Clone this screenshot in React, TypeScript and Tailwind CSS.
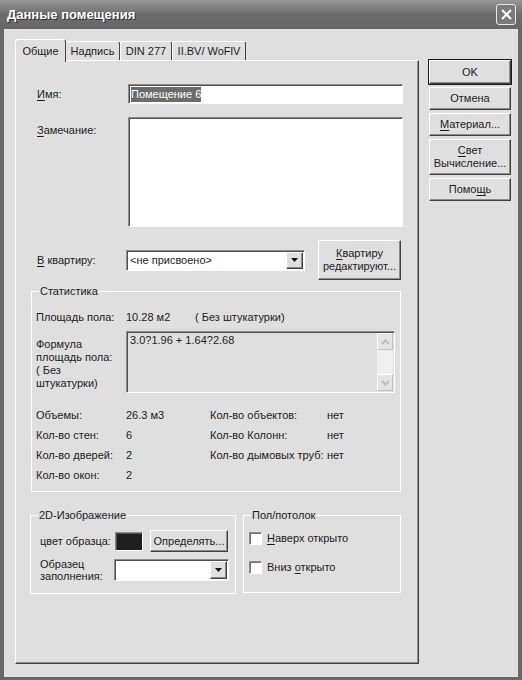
import React from "react";

const font = "font-['Liberation_Sans',Arial,sans-serif]";
const raised =
  "border border-t-white border-l-white border-r-[#404040] border-b-[#404040] shadow-[inset_-1px_-1px_0_#8c8c8c]";
const sunken =
  "border border-t-[#8c8c8c] border-l-[#8c8c8c] border-r-white border-b-white shadow-[inset_1px_1px_0_#505050]";

function U({ children }: { children: React.ReactNode }) {
  return <span className="underline underline-offset-[2px]">{children}</span>;
}

function Btn({ className = "", children }: { className?: string; children: React.ReactNode }) {
  return (
    <div className={`${raised} bg-[#dfdfdf] flex items-center justify-center text-center leading-[13px] ${className}`}>
      {children}
    </div>
  );
}

function Select({ className = "", value = "" }: { className?: string; value?: string }) {
  return (
    <div className={`${sunken} bg-white flex items-stretch p-[1px] ${className}`}>
      <div className="flex-1 pl-[2px] flex items-center">{value}</div>
      <div className={`${raised} w-[17px] bg-[#dfdfdf] flex items-center justify-center`}>
        <svg width="7" height="4" viewBox="0 0 7 4">
          <path d="M0 0h7L3.5 4z" fill="#111" />
        </svg>
      </div>
    </div>
  );
}

function Group({ title, className = "", children }: { title: string; className?: string; children: React.ReactNode }) {
  return (
    <fieldset className={`border border-white ${className}`}>
      <legend className="ml-[7px] px-[1px] leading-[13px]">{title}</legend>
      {children}
    </fieldset>
  );
}

function Check({ children }: { children: React.ReactNode }) {
  return (
    <div className="flex items-center h-[13px]">
      <div className="w-[13px] h-[13px] bg-white border border-t-[#8c8c8c] border-l-[#8c8c8c] border-b-white border-r-white shadow-[inset_1px_1px_0_#707070]" />
      <span className="ml-[5px]">{children}</span>
    </div>
  );
}

function Chevron({ up }: { up?: boolean }) {
  return (
    <div className="h-[17px] border border-t-white border-l-white border-r-[#c4c4c4] border-b-[#c4c4c4] bg-[#e4e4e4] flex items-center justify-center">
      <svg width="9" height="6" viewBox="0 0 9 6">
        <path d={up ? "M1 5l3.5-3.5L8 5" : "M1 1l3.5 3.5L8 1"} stroke="#bdbdbd" strokeWidth="2" fill="none" />
      </svg>
    </div>
  );
}

export default function App() {
  const stats = [
    ["Объемы:", "26.3 м3", "Кол-во объектов:", "нет"],
    ["Кол-во стен:", "6", "Кол-во Колонн:", "нет"],
    ["Кол-во дверей:", "2", "Кол-во дымовых труб:", "нет"],
    ["Кол-во окон:", "2", "", ""],
  ];

  return (
    <div className={`${font} w-[522px] h-[680px] flex flex-col text-[11px] text-[#1c1c1c] bg-[#676767]`}>
      <div className="h-[29px] flex items-center justify-between pl-[7px] pr-[6px] bg-linear-to-b from-[#979797] via-[#6d6d6d] to-[#666666]">
        <span className="text-white font-bold text-[13px] [text-shadow:1px_1px_0_#2e2e2e]">Данные помещения</span>
        <div className="w-[20px] h-[21px] rounded-[3px] border border-[#e8e8e8] bg-[#7a7a7a] flex items-center justify-center">
          <svg width="11" height="11" viewBox="0 0 11 11">
            <path d="M1 1l9 9M10 1l-9 9" stroke="#fff" strokeWidth="2" />
          </svg>
        </div>
      </div>

      <div className="flex-1 flex bg-[#dfdfdf] border-l-[4px] border-r-[4px] border-b-[3px] border-[#676767] pl-[11px] pt-[10px]">
        <div className="w-[404px] flex flex-col">
          <div className="flex items-end h-[21px]">
            <div className="relative z-10 -mb-[2px] h-[23px] w-[51px] bg-[#dfdfdf] border-t border-l border-r border-t-white border-l-white border-r-[#404040] rounded-t-[3px] flex items-center justify-center">
              Общие
            </div>
            <div className="h-[19px] w-[54px] border-t border-r border-t-white border-r-[#404040] rounded-t-[3px] flex items-center justify-center pt-[1px]">
              Надпись
            </div>
            <div className="h-[19px] w-[52px] border-t border-l border-r border-t-white border-l-white border-r-[#404040] rounded-t-[3px] flex items-center justify-center pt-[1px]">
              DIN 277
            </div>
            <div className="h-[19px] w-[74px] border-t border-l border-r border-t-white border-l-white border-r-[#404040] rounded-t-[3px] flex items-center justify-center pt-[1px]">
              II.BV/ WoFlV
            </div>
          </div>

          <div className={`h-[604px] bg-[#dfdfdf] flex flex-col ${raised}`}>
            <div className="mt-[23px] flex items-center pl-[21px]">
              <span className="w-[91px]">
                <U>И</U>мя:
              </span>
              <div className={`${sunken} bg-white w-[275px] h-[20px] flex items-center pl-[2px]`}>
                <span className="bg-[#6b6b6b] text-white leading-[15px]">Помещение 6</span>
              </div>
            </div>

            <div className="mt-[13px] flex items-start pl-[21px]">
              <span className="w-[91px] mt-[5px]">
                <U>З</U>амечание:
              </span>
              <div className={`${sunken} bg-white w-[275px] h-[110px]`} />
            </div>

            <div className="mt-[13px] flex items-center pl-[21px] h-[40px]">
              <span className="w-[89px]">
                <U>В</U> квартиру:
              </span>
              <Select className="w-[179px] h-[21px]" value="<не присвоено>" />
              <Btn className="ml-[13px] w-[83px] h-[40px]">
                <span>
                  <U>К</U>вартиру
                  <br />
                  редактируют...
                </span>
              </Btn>
            </div>

            <Group title="Статистика" className="mt-[5px] ml-[15px] w-[370px] pb-[6px]">
              <div className="pl-[4px]">
                <div className="mt-[13px] flex h-[13px] leading-[13px]">
                  <span className="w-[90px]">Площадь пола:</span>
                  <span className="w-[69px]">10.28 м2</span>
                  <span>( Без штукатурки)</span>
                </div>
                <div className="mt-[7px] flex">
                  <span className="w-[90px] pt-[7px] leading-[13px]">
                    Формула
                    <br />
                    площадь пола:
                    <br />( Без
                    <br />
                    штукатурки)
                  </span>
                  <div className={`${sunken} bg-[#dfdfdf] w-[269px] h-[62px] flex`}>
                    <div className="flex-1 pl-[3px] pt-[2px] leading-[13px]">3.0?1.96 + 1.64?2.68</div>
                    <div className="w-[16px] flex flex-col bg-[#efefef] mr-[1px] mt-[1px] mb-[1px]">
                      <Chevron up />
                      <div className="flex-1" />
                      <Chevron />
                    </div>
                  </div>
                </div>
                <div className="mt-[12px] flex flex-col">
                  {stats.map((r, i) => (
                    <div key={i} className="flex h-[20px] leading-[20px]">
                      <span className="w-[90px]">{r[0]}</span>
                      <span className="w-[84px]">{r[1]}</span>
                      <span className="w-[117px]">{r[2]}</span>
                      <span>{r[3]}</span>
                    </div>
                  ))}
                </div>
              </div>
            </Group>

            <div className="mt-[17px] ml-[14px] flex gap-[7px] items-start">
              <Group title="2D-Изображение" className="w-[206px] pb-[11px]">
                <div className="mt-[8px] flex items-center h-[22px] pl-[9px]">
                  <span className="w-[75px]">цвет образца:</span>
                  <div className={`${sunken} w-[28px] h-[19px] bg-[#1e1e1e]`} />
                  <Btn className="ml-[7px] w-[78px] h-[22px]">Определять...</Btn>
                </div>
                <div className="mt-[7px] flex items-start pl-[9px]">
                  <span className="w-[74px] leading-[12px] -mt-[1px]">
                    Образец
                    <br />
                    заполнения:
                  </span>
                  <Select className="w-[115px] h-[22px]" />
                </div>
              </Group>
              <Group title="Пол/потолок" className="w-[158px] pb-[18px]">
                <div className="pl-[5px]">
                  <div className="mt-[10px]">
                    <Check>
                      <U>Н</U>аверх открыто
                    </Check>
                  </div>
                  <div className="mt-[16px]">
                    <Check>
                      Вниз <U>о</U>ткрыто
                    </Check>
                  </div>
                </div>
              </Group>
            </div>
          </div>
        </div>

        <div className="ml-[10px] mt-[21px] w-[82px] flex flex-col gap-[3px]">
          <Btn className="h-[24px] outline outline-1 outline-[#1a1a1a]">OK</Btn>
          <Btn className="h-[23px]">Отмена</Btn>
          <Btn className="h-[23px]">
            <span>
              <U>М</U>атериал...
            </span>
          </Btn>
          <Btn className="h-[36px]">
            <span>
              <U>С</U>вет
              <br />
              Вычисление...
            </span>
          </Btn>
          <Btn className="h-[23px]">
            <span>
              Помо<U>щ</U>ь
            </span>
          </Btn>
        </div>
      </div>
    </div>
  );
}
